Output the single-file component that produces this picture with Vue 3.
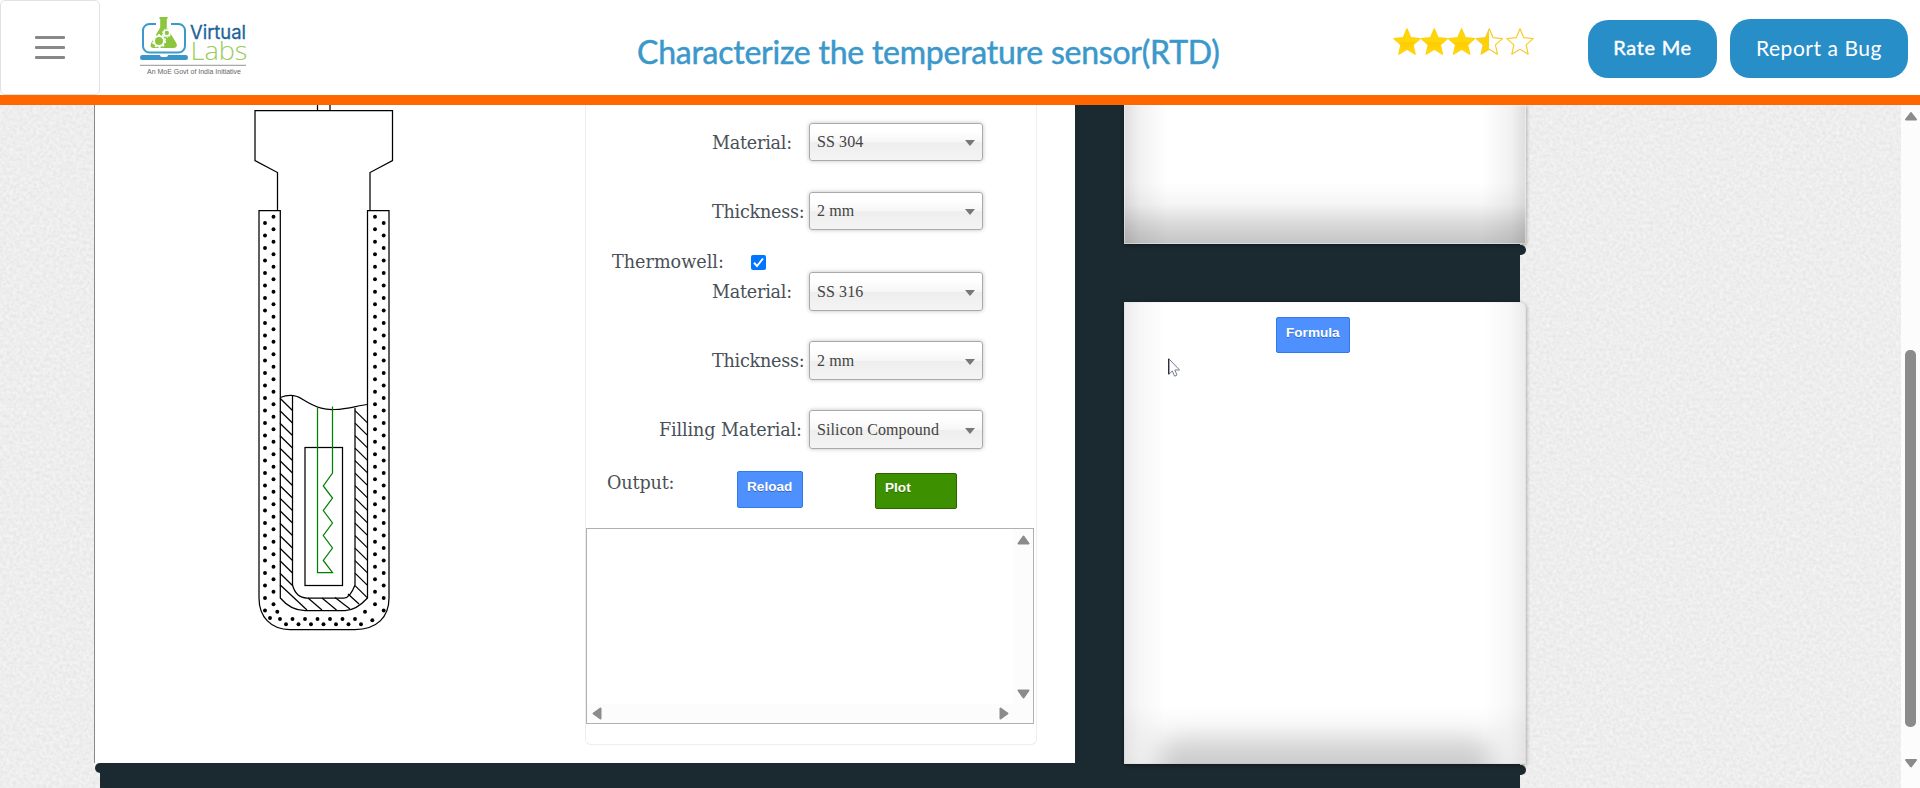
<script setup>
const fields = [
  { label: 'Material:', value: 'SS 304', cls: 'f1' },
  { label: 'Thickness:', value: '2 mm', cls: 'f2' },
  { label: 'Material:', value: 'SS 316', cls: 'f3' },
  { label: 'Thickness:', value: '2 mm', cls: 'f4' },
  { label: 'Filling Material:', value: 'Silicon Compound', cls: 'f5' },
]
const upper = fields.slice(0, 2)
const lower = fields.slice(2)

const dots = []
for (let i = 0; i < 32; i++) {
  const y = 111.7 + i * 12.5
  dots.push([273.5, y], [375, y], [265, y + 6.3], [383.7, y + 6.3])
}
for (let i = 0; i < 7; i++) dots.push([280 + i * 12.5, 514], [286 + i * 12.5, 519.3])
dots.push([277.3, 506.7], [270, 513], [365, 506.7], [372.3, 515.3])

const hatches = []
for (let i = 0; i < 15; i++) {
  const y = 293.3 + i * 12.5
  hatches.push([280, y, 292.5, y + 12.2], [355, y + 12.3, 367.5, y + 24.6])
}
hatches.push(
  [280, 479.7, 307, 505], [308, 493, 322, 505], [322, 493, 336.5, 505],
  [335, 492.5, 350, 504], [348, 489, 359, 499],
)
const star = 'M14 .8 L17.8 9.7 L27.2 10.6 L20.1 16.9 L22.2 26.2 L14 21.3 L5.8 26.2 L7.9 16.9 L.8 10.6 L10.2 9.7 Z'
const starX = [0, 27.3, 54.6, 82.3, 113]
</script>

<template>
  <div class="page">
    <header class="top">
      <button class="menu" aria-label="Menu"><i></i><i></i><i></i></button>
      <svg class="logo" width="110" height="62" viewBox="138 15 110 62">
        <rect x="143" y="24" width="42" height="28.5" rx="6.5" fill="#fff" stroke="#3a9bcb" stroke-width="2" />
        <rect x="156" y="20" width="15" height="8" fill="#fff" />
        <path d="M159.5 17h8v2h-.7v8.500l9.500 15.500q2 4.700-2.500 5h-20.600q-4-.5-2-5l9-15.500v-8.500h-.7z" fill="#8cc63f" />
        <circle cx="159" cy="41" r="5" fill="#8cc63f" stroke="#fff" stroke-width="2" />
        <circle cx="159" cy="41" r="6.300" fill="none" stroke="#fff" stroke-width="1.500" stroke-dasharray="2 2" />
        <circle cx="166.800" cy="33" r="3" fill="none" stroke="#fff" stroke-width="1.700" />
        <circle cx="166.800" cy="33" r="4.300" fill="none" stroke="#fff" stroke-width="1" stroke-dasharray="1.400 1.300" />
        <path d="M142 55h18q0 2 2 2h4q2 0 2-2h18q2 0 2 2.500t-2 2.500h-44q-2 0-2-2.500t2-2.500z" fill="#3a95c9" />
        <text x="190" y="38.500" font-size="19" fill="#1c6399" stroke="#1c6399" stroke-width=".3" textLength="56" lengthAdjust="spacingAndGlyphs">Virtual</text>
        <text x="190.500" y="60" font-size="25" class="thin" fill="#9bcb5c" textLength="57" lengthAdjust="spacingAndGlyphs">Labs</text>
        <path d="M140 65.300h106" stroke="#777" stroke-width=".8" />
        <text x="147" y="74" font-size="7.300" class="tag" fill="#666" textLength="94" lengthAdjust="spacingAndGlyphs">An MoE Govt of India Initiative</text>
      </svg>
      <h1>Characterize the temperature sensor(RTD)</h1>
      <svg class="stars" width="142" height="28" viewBox="0 0 142 28">
        <defs>
          <linearGradient id="gold" x1="0" y1="0" x2="0" y2="1">
            <stop offset=".5" stop-color="#ffd60a" /><stop offset=".56" stop-color="#ffca05" /><stop offset="1" stop-color="#ffdb0a" />
          </linearGradient>
          <linearGradient id="half">
            <stop offset=".5" stop-color="#ffd006" /><stop offset=".5" stop-color="#fff" />
          </linearGradient>
        </defs>
        <path v-for="(x, i) in starX" :key="i" :d="star" :transform="`translate(${x} 0)`"
          :fill="i < 3 ? 'url(#gold)' : i === 3 ? 'url(#half)' : '#fff'" :stroke="i < 3 ? '#ffd20a' : '#f5cd30'" stroke-width="1.200" stroke-linejoin="round" />
      </svg>
      <button class="pill rate">Rate Me</button>
      <button class="pill bug">Report a Bug</button>
    </header>

    <div class="body">
      <main class="canvas">
        <svg class="grain" width="1901" height="683">
          <filter id="paper" x="0" y="0" width="100%" height="100%" color-interpolation-filters="sRGB">
            <feTurbulence type="fractalNoise" baseFrequency=".3" numOctaves="3" seed="7" />
            <feColorMatrix values=".09 0 0 0 .886  .09 0 0 0 .886  .09 0 0 0 .886  0 0 0 0 1" />
          </filter>
          <rect width="1901" height="683" filter="url(#paper)" />
        </svg>
        <div class="lab">
          <section class="main">
            <svg class="probe" width="490" height="658" viewBox="95 0 490 658" fill="none" stroke="#000" stroke-width="1.250">
              <path d="M317.500 0v5.500M330 0v5.500M277.500 105.500V67.500L255 55.500V5.500H392.500V55.500L370 67.500V105.500" />
              <path d="M280.300 105.500H259V493C259 512 271 524.500 290 524.500H355C377 524.500 389 512 389 493V105.500H367.500V493C362 499 355 505.500 345 505.500H305C295 505.500 287 501 280.300 493Z" />
              <path d="M280.300 292.500C288 289.500 295 289.500 302 294C318 304 326 305 335 304.500C348 304 358 300.500 367.500 299.500" />
              <path d="M292.500 290V480Q296 493 307 493H344Q350 493 355 480V303" />
              <rect x="305" y="342.500" width="37.500" height="138" />
              <path v-for="(h, i) in hatches" :key="i" :d="`M${h[0]} ${h[1]}L${h[2]} ${h[3]}`" />
              <g fill="#000" stroke="none"><circle v-for="(d, i) in dots" :key="i" :cx="d[0]" :cy="d[1]" r="1.950" /></g>
              <path stroke="#008000" d="M317.500 302V467.500H332.500L323.300 455.500L332.500 443L323.300 430.500L332.500 418L323.300 405.500L332.500 393L323.300 381L332.500 368V301.500" />
            </svg>
            <form class="panel" @submit.prevent>
              <div v-for="f in upper" :key="f.cls" class="row" :class="f.cls">
                <label>{{ f.label }}</label>
                <div class="select">{{ f.value }}<b></b></div>
              </div>
              <div class="check">
                <label>Thermowell:</label>
                <svg width="15" height="15" viewBox="0 0 15 15"><rect width="15" height="15" rx="2" fill="#0075ff" /><path d="M3 7.800L6 11L12 3.500" fill="none" stroke="#fff" stroke-width="2" /></svg>
              </div>
              <div v-for="f in lower" :key="f.cls" class="row" :class="f.cls">
                <label>{{ f.label }}</label>
                <div class="select">{{ f.value }}<b></b></div>
              </div>
              <div class="actions">
                <label>Output:</label>
                <button class="btn reload">Reload</button>
                <button class="btn plot">Plot</button>
              </div>
              <div class="output">
                <div class="text"></div>
                <div class="vbar">
                  <svg width="13" height="10" viewBox="0 0 13 10"><path class="tri" d="M6.500 1.500L11.500 8.500H1.500Z" /></svg>
                  <svg width="13" height="10" viewBox="0 0 13 10"><path class="tri" d="M6.500 8.500L11.500 1.500H1.500Z" /></svg>
                </div>
                <div class="hbar">
                  <svg width="10" height="13" viewBox="0 0 10 13"><path class="tri" d="M1.500 6.500L8.500 1.500V11.500Z" /></svg>
                  <svg width="10" height="13" viewBox="0 0 10 13"><path class="tri" d="M8.500 6.500L1.500 1.500V11.500Z" /></svg>
                </div>
              </div>
            </form>
          </section>
          <aside class="side">
            <div class="card first"></div>
            <div class="knob"></div>
            <div class="card second">
              <button class="btn formula">Formula</button>
              <svg class="cursor" width="13" height="20" viewBox="0 0 13 20"><path d="M.8 .8V16.300L4.300 13L6.600 18.200L9 17L6.800 12H11.600Z" fill="#fff" stroke="#777b92" stroke-width="1" /><path d="M.7 .8V16.300" stroke="#223" stroke-width="1.200" /></svg>
            </div>
            <div class="knob"></div>
          </aside>
          <div class="foot"></div>
        </div>
      </main>
      <div class="scroll">
        <svg width="14" height="10" viewBox="0 0 14 10"><path class="tri" d="M7 2L12 8.500H2Z" /></svg>
        <span class="thumb"></span>
        <svg width="14" height="10" viewBox="0 0 14 10"><path class="tri" d="M7 8.500L12 2H2Z" /></svg>
      </div>
    </div>
  </div>
</template>

<style>
body { overflow: hidden; }
</style>

<style scoped>
* { box-sizing: border-box; }
button { border: 0; padding: 0; margin: 0; }
.page { width: 1920px; height: 788px; background: #fff; overflow: hidden; }
.top { height: 105px; border-bottom: 10px solid #f60; display: flex; align-items: flex-start; }
.menu { width: 100px; height: 95px; background: #fff; border: 1px solid #e2e2e2; border-radius: 5px; display: flex; flex-direction: column; align-items: center; justify-content: center; gap: 7px; }
.menu i { width: 30px; height: 3px; background: #888; border-radius: 1px; }
.logo { margin: 15px 0 0 38px; font-family: Inter, "Open Sans", sans-serif; }
.thin { font-weight: 300; font-family: "Open Sans", Lato, sans-serif; }
.tag { font-family: "Liberation Sans", sans-serif; }
h1 { margin: 32px 0 0 389px; width: 590px; font: 400 32px/40px Lato, sans-serif; color: #3a98cb; white-space: nowrap; letter-spacing: -.24px; -webkit-text-stroke: .5px #3a98cb; }
.stars { margin: 28px 0 0 166px; }
.pill { background: #288ec8; color: #fff; border-radius: 20px; height: 58px; margin-top: 20px; font: 20px/53px Lato, sans-serif; text-align: center; white-space: nowrap; }
.rate { width: 129px; margin-left: 53px; padding-bottom: 3px; -webkit-text-stroke: .4px #fff; letter-spacing: .7px; }
.bug { width: 178px; margin-left: 13px; padding-bottom: 2px; font-size: 21px; letter-spacing: .55px; margin-top: 19px; height: 59px; line-height: 57px; }
.body { display: flex; height: 683px; }
.canvas { width: 1901px; position: relative; background: #eee; overflow: hidden; }
.grain { position: absolute; left: 0; top: 0; }
.lab { position: relative; margin-left: 94px; width: 1434px; height: 683px; display: grid; grid-template-columns: 981px 1fr; grid-template-rows: 658px 10px; background: linear-gradient(#1b2930, #1b2930) 6px 0 / 1420px 100% no-repeat; }
.main { border-left: 1px solid #888; background: #fff; display: flex; height: 658px; }
.probe { flex: none; }
.foot { grid-column: 1; grid-row: 2; margin-left: 1px; background: #1b2930; border-radius: 5px 0 0 5px; }
.panel { width: 452px; height: 640px; border: 1px solid #eee; border-top: 0; border-radius: 0 0 6px 6px; color: #495057; font-family: "DejaVu Serif", serif; font-size: 17.600px; }
label { white-space: nowrap; }
.row { display: flex; width: 398px; height: 39px; }
.row label { margin-left: 126px; width: 97px; line-height: 40px; letter-spacing: -.24px; }
.f1 { margin-top: 18px; }
.f2 { margin-top: 30px; }
.f4, .f5 { margin-top: 30px; }
.f3 label, .f4 label, .f5 label { line-height: 41px; }
.f5 .select { height: 39px; }
.f5 label { margin-left: 73px; width: 150px; letter-spacing: -.12px; }
.select { flex: none; width: 174px; height: 38px; border: 1px solid #aaa; border-radius: 3px; box-shadow: 0 0 4px rgba(0, 0, 0, .25); background: linear-gradient(#fff 20%, #f6f6f6 50%, #eee 52%, #f4f4f4 100%); color: #444; font: 16px/36px "Liberation Serif", serif; padding: 0 7px; letter-spacing: .1px; display: flex; justify-content: space-between; align-items: center; }
.select b { border: 5px solid transparent; border-top: 6px solid #777; border-bottom: 0; margin-top: 2px; }
.f3 .select, .f4 .select { height: 39px; }
.check { margin: 19px 0 0 26px; height: 22px; display: flex; align-items: center; gap: 26px; }
.check svg { margin-top: 3px; }
.check label { width: 113px; padding-top: 1px; }
.actions { display: flex; height: 79px; padding-left: 21px; }
.actions label { width: 130px; padding-top: 24px; letter-spacing: -.15px; }
.btn { color: #fff; font: bold 13.600px/16px "Liberation Sans", sans-serif; text-align: left; border-radius: 2px; text-shadow: 0 1px rgba(0, 0, 0, .3); display: flex; }
.reload, .formula { background: #4d90fe; border: 1px solid #3079ed; }
.reload { width: 66px; height: 37px; margin-top: 22px; padding: 7px 9px; }
.plot { width: 82px; height: 36px; margin: 24px 0 0 72px; padding: 6px 9px; background: #3d9000; border: 1px solid #2d6200; }
.output { width: 448px; height: 196px; border: 1px solid #aeb0b2; display: grid; grid-template: 175px 19px / 427px 19px; background: #fcfcfc; }
.text { background: #fff; }
.vbar { display: flex; flex-direction: column; justify-content: space-between; align-items: center; padding: 6px 0 5px; }
.hbar { display: flex; justify-content: space-between; align-items: center; padding: 0 5px 0 5px; }
.tri { fill: #8b8b8b; stroke: #8b8b8b; stroke-width: 2; stroke-linejoin: round; }
.side { grid-column: 2; grid-row: 1; padding-left: 49px; }
.card { width: 402px; overflow: hidden; position: relative; }
.first { height: 139px; background:
  linear-gradient(90deg, rgba(0, 0, 0, .13), rgba(0, 0, 0, .05) 16px, transparent 44px, transparent calc(100% - 44px), rgba(0, 0, 0, .05) calc(100% - 16px), rgba(0, 0, 0, .13)),
  linear-gradient(transparent calc(100% - 62px), rgba(0, 0, 0, .04) calc(100% - 40px), rgba(0, 0, 0, .16) calc(100% - 18px), rgba(0, 0, 0, .23)) #fff;
  box-shadow: 0 1px 4px rgba(0, 0, 0, .4), inset 0 0 0 1px rgba(255, 255, 255, .4); clip-path: inset(0 -8px -8px -8px); }
.second { height: 462px; margin-top: 58px; border-radius: 0 6px 0 0; background:
  linear-gradient(90deg, rgba(0, 0, 0, .08), rgba(0, 0, 0, .03) 16px, transparent 42px, transparent calc(100% - 42px), rgba(0, 0, 0, .03) calc(100% - 16px), rgba(0, 0, 0, .08)),
  linear-gradient(transparent calc(100% - 60px), rgba(0, 0, 0, .03) calc(100% - 30px), rgba(0, 0, 0, .04)) #fff;
  box-shadow: 0 1px 4px rgba(0, 0, 0, .4), inset 0 0 0 1px rgba(0, 0, 0, .03); }
.second::after { content: ""; position: absolute; left: 34px; right: 34px; bottom: -26px; height: 50px; border-radius: 20px; background: rgba(0, 0, 0, .16); filter: blur(12px); }
.knob { width: 14px; height: 10px; margin: 1px 0 -11px 388px; background: #1b2930; border-radius: 0 5px 5px 0; }
.formula { width: 74px; height: 36px; margin: 15px 0 0 152px; padding: 7px 9px; }
.cursor { position: absolute; left: 44px; top: 56px; }
.scroll { width: 19px; background: #fcfcfc; display: flex; flex-direction: column; align-items: center; padding-top: 6px; }
.thumb { flex: none; width: 11px; height: 377px; margin: 229px 0 31px; border-radius: 5px; background: #8b8b8b; }
.scroll svg { flex: none; }
</style>
